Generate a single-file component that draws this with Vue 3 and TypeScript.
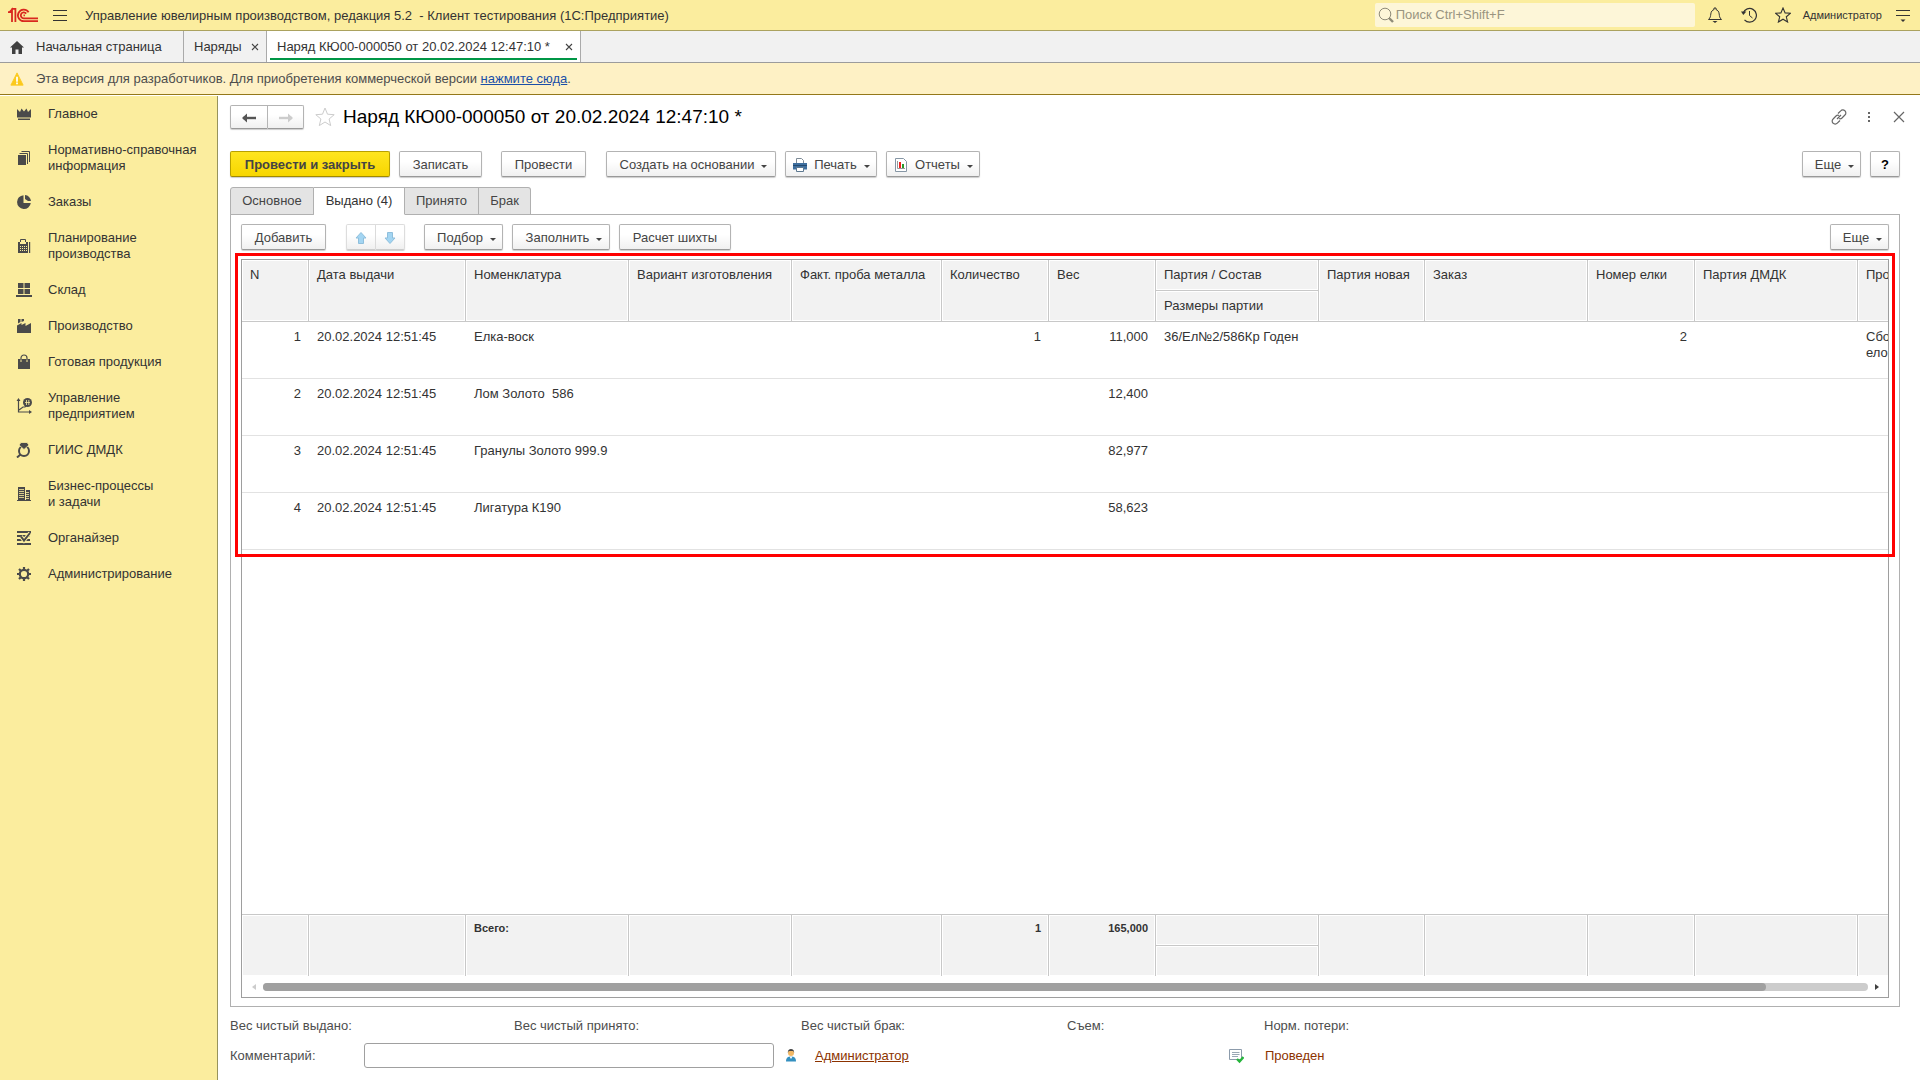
<script setup lang="ts">
import { ref } from 'vue'

interface Section { lines: string[]; icon: string }
interface Column { key: string; title: string; width: number; num?: boolean; sub?: string; total?: string }
type Row = Record<string, string>

const sections: Section[] = [
  { lines: ['Главное'], icon: 'crown' },
  { lines: ['Нормативно-справочная', 'информация'], icon: 'books' },
  { lines: ['Заказы'], icon: 'pie' },
  { lines: ['Планирование', 'производства'], icon: 'calc' },
  { lines: ['Склад'], icon: 'store' },
  { lines: ['Производство'], icon: 'factory' },
  { lines: ['Готовая продукция'], icon: 'bag' },
  { lines: ['Управление', 'предприятием'], icon: 'chart' },
  { lines: ['ГИИС ДМДК'], icon: 'ring' },
  { lines: ['Бизнес-процессы', 'и задачи'], icon: 'building' },
  { lines: ['Органайзер'], icon: 'organizer' },
  { lines: ['Администрирование'], icon: 'gear' },
]

const columns: Column[] = [
  { key: 'n', title: 'N', width: 67, num: true },
  { key: 'date', title: 'Дата выдачи', width: 157 },
  { key: 'item', title: 'Номенклатура', width: 163, total: 'Всего:' },
  { key: 'variant', title: 'Вариант изготовления', width: 163 },
  { key: 'fineness', title: 'Факт. проба металла', width: 150 },
  { key: 'qty', title: 'Количество', width: 107, num: true, total: '1' },
  { key: 'weight', title: 'Вес', width: 107, num: true, total: '165,000' },
  { key: 'batch', title: 'Партия / Состав', width: 163, sub: 'Размеры партии' },
  { key: 'newBatch', title: 'Партия новая', width: 106 },
  { key: 'order', title: 'Заказ', width: 163 },
  { key: 'tree', title: 'Номер елки', width: 107, num: true },
  { key: 'dmdk', title: 'Партия ДМДК', width: 163 },
  { key: 'process', title: 'Процесс', width: 80 },
]

const rows: Row[] = [
  { n: '1', date: '20.02.2024 12:51:45', item: 'Елка-воск', qty: '1', weight: '11,000', batch: '36/Ел№2/586Кр Годен', tree: '2', process: 'Сборка елок' },
  { n: '2', date: '20.02.2024 12:51:45', item: 'Лом Золото  586', weight: '12,400' },
  { n: '3', date: '20.02.2024 12:51:45', item: 'Гранулы Золото 999.9', weight: '82,977' },
  { n: '4', date: '20.02.2024 12:51:45', item: 'Лигатура К190', weight: '58,623' },
]

const pages = [
  { title: 'Основное', cls: 'p-main' },
  { title: 'Выдано (4)', cls: 'p-issued' },
  { title: 'Принято', cls: 'p-received' },
  { title: 'Брак', cls: 'p-defect' },
]
const activePage = ref(1)
const query = ref('')
const comment = ref('')
</script>

<template>
  <div class="app">
    <header class="titlebar">
      <svg class="logo" viewBox="0 0 30 16" fill="none" stroke="#d9281e" stroke-width="1.8">
        <path d="M0 5.200H1.600L4 2.600V15M3.400 1.900H7.400V15M.6 5.200H4" />
        <path d="M20.600 5.200A5.800 5.800 0 1 0 16 14.200H30" />
        <path d="M18.200 6.600A3 3 0 1 0 16 11.400H30" />
        <path d="M15.500 8.400h1.400" />
      </svg>
      <button class="bare burger" aria-label="Меню">
        <svg viewBox="0 0 14 14" stroke="#333" stroke-width="1"><path d="M0 2.500h14M0 7.500h14M0 12.500h14" /></svg>
      </button>
      <div class="app-title">Управление ювелирным производством, редакция 5.2 &nbsp;- Клиент тестирования (1С:Предприятие)</div>
      <label class="search">
        <svg viewBox="0 0 16 16" fill="none" stroke="#8f8b78"><circle cx="7" cy="7" r="5.800" /><path d="M11 11l4 4" stroke-width="2.400" /></svg>
        <input v-model="query" type="text" placeholder="Поиск Ctrl+Shift+F" aria-label="Поиск" />
      </label>
      <div class="tools">
        <button class="bare" aria-label="Уведомления">
          <svg viewBox="0 0 16 16" fill="none" stroke="#333"><path d="M1.500 12.500h13c-2.200-2-2-3.500-2.300-5.500C11.900 4.300 10.500 3 9 2.600V1H7v1.600C5.500 3 4.100 4.300 3.800 7c-.3 2-.1 3.500-2.300 5.500z" /><path d="M5.500 14h5L8 16z" fill="#333" stroke="none" /></svg>
        </button>
        <button class="bare" aria-label="История">
          <svg viewBox="0 0 16 16" fill="none" stroke="#333"><path d="M2.200 6A6.800 6.800 0 1 1 3.500 12.800" stroke-width="1.200" /><path d="M8.500 4v4.500l3 2.500" /><path d="M0 4.500h5.400L2.300 8z" fill="#333" stroke="none" /></svg>
        </button>
        <button class="bare" aria-label="Избранное">
          <svg viewBox="0 0 16 16" fill="none" stroke="#333" stroke-width="1.100"><path d="M8 1l2.100 4.900 5.200.4-4 3.500 1.300 5.200L8 12.200 3.400 15l1.300-5.200-4-3.500 5.200-.4z" /></svg>
        </button>
      </div>
      <a href="#" class="user">Администратор</a>
      <button class="bare settings" aria-label="Сервис и настройки">
        <svg viewBox="0 0 14 14" stroke="#333"><path d="M0 2.500h14M0 7.500h14" /><path d="M4.500 11.500h5L7 14z" fill="#333" stroke="none" /></svg>
      </button>
    </header>

    <nav class="windows">
      <a href="#" class="win home">
        <svg viewBox="0 0 16 16" fill="#404040"><path d="M8 2l7 6.500h-2V15H9.500v-4.500h-3V15H3V8.500H1z" /></svg>
        <span>Начальная страница</span>
      </a>
      <div class="win orders"><a href="#">Наряды</a><button class="bare close" aria-label="Закрыть"><svg viewBox="0 0 8 8" stroke="#444" stroke-width="1.100"><path d="M1 1l6 6M7 1L1 7" /></svg></button></div>
      <div class="win current"><a href="#">Наряд КЮ00-000050 от 20.02.2024 12:47:10 *</a><button class="bare close" aria-label="Закрыть"><svg viewBox="0 0 8 8" stroke="#444" stroke-width="1.100"><path d="M1 1l6 6M7 1L1 7" /></svg></button></div>
    </nav>

    <div class="notice">
      <svg viewBox="0 0 16 16"><path d="M8 1l7 14H1z" fill="#fbc91b" stroke="#fbc91b" stroke-linejoin="round" /><path d="M7 5.500h2V11H7zM7 12h2v2H7z" fill="#fff" /></svg>
      <span>Эта версия для разработчиков. Для приобретения коммерческой версии <a href="#">нажмите сюда</a>.</span>
    </div>

    <div class="body">
      <aside class="sidebar">
        <a v-for="s in sections" :key="s.icon" href="#" class="section">
          <svg viewBox="0 0 16 16" fill="#4a4a4a">
            <path v-if="s.icon === 'crown'" d="M1 3l3 3 1.500-3.500L8 5.500l2.500-3L12 6l3-3v8.500H1zM2 12.500h12V14H2z" />
            <g v-else-if="s.icon === 'books'"><path d="M2 5h8v10H2z" /><path d="M3.500 3.500h8V14M5.500 1.500h8V12" fill="none" stroke="#4a4a4a" /></g>
            <g v-else-if="s.icon === 'pie'"><path d="M7.500 1.200A6.900 6.900 0 1 0 14.800 9H7.500z" /><path d="M9 1a6.500 6.500 0 0 1 6 6h-3L9 5z" /></g>
            <g v-else-if="s.icon === 'calc'"><path d="M4.500 5V1.500h5V5" fill="none" stroke="#4a4a4a" /><path d="M2 4h10v11H2zM13 4h1.200v11H13z" /><path d="M4 4h6v2H4z" fill="#fbed9e" /><path d="M4 8.500h7M4 10.500h7M4 12.500h7" stroke="#fbed9e" stroke-dasharray="1 1" /></g>
            <path v-else-if="s.icon === 'store'" d="M2 1h5.500v5H2zM8.500 1H14v5H8.500zM2 7h5.500v5H2zM8.500 7H14v5H8.500zM0 13h16v2H0z" />
            <path v-else-if="s.icon === 'factory'" d="M1 15V7.500L5.500 5V7l4-2v3L15 5v10zM2 1h2.500v3L2 5.500zM5.500 1H8v2L5.500 4z" />
            <g v-else-if="s.icon === 'bag'"><path d="M2 5h12v10H2z" /><path d="M5 8V4a3 3 0 0 1 6 0v4" fill="none" stroke="#4a4a4a" stroke-width="1.200" /><path d="M5 5.500V8M11 5.500V8" stroke="#fbed9e" /></g>
            <g v-else-if="s.icon === 'chart'"><path d="M2.500 2v12H14M3 12l4-3 2 0 2-2" fill="none" stroke="#4a4a4a" stroke-width="1.200" /><path d="M2.500 0l2 3h-4zM16 14l-3 2v-4z" /><circle cx="11.500" cy="4.500" r="4.500" /><path d="M10.500 2v5M12.800 2v5M9 4.500h5" stroke="#fbed9e" stroke-width=".8" /></g>
            <g v-else-if="s.icon === 'ring'"><circle cx="8" cy="9" r="5" fill="none" stroke="#4a4a4a" stroke-width="2" /><path d="M5 .5h6l2 2.500L8 7.500 3 3z" stroke="#fbed9e" stroke-width=".8" /><path d="M4.500 12.500L1 15.500" stroke="#4a4a4a" stroke-width="2" /></g>
            <g v-else-if="s.icon === 'building'"><path d="M2 1h7v14H2zM10 4h4v11h-4zM1 14h14v1H1z" /><path d="M3 3.500h5M3 5.500h5M3 7.500h5M3 9.500h5M3 11.500h5M10 6.500h3M10 8.500h3M10 10.500h3M10 12.500h3" stroke="#fbed9e" stroke-width=".8" /></g>
            <g v-else-if="s.icon === 'organizer'" fill="none" stroke="#4a4a4a"><path d="M1 2h14M1 6h13M1 10h13M1 14h14" stroke-width="2" /><path d="M5 6.500l3 4L14 3" stroke="#fbed9e" stroke-width="4" /><path d="M5 6.500l3 4L14 3" stroke-width="2" /></g>
            <g v-else fill="none" stroke="#4a4a4a"><circle cx="8" cy="8" r="4.200" stroke-width="2.200" /><path d="M8 1v2.500M8 12.500V15M1 8h2.500M12.500 8H15M3 3l1.800 1.800M11.200 11.200L13 13M3 13l1.800-1.800M11.200 4.800L13 3" stroke-width="2.200" /></g>
          </svg>
          <span><template v-for="(l, i) in s.lines" :key="l"><br v-if="i" />{{ l }}</template></span>
        </a>
      </aside>

      <main class="form">
        <div class="form-head">
          <div class="pair nav">
            <button class="btn" aria-label="Назад"><svg viewBox="0 0 16 12"><path d="M2 6h13" stroke="#555" stroke-width="2.400" /><path d="M1 6l5-4.500v9z" fill="#555" /></svg></button>
            <button class="btn" aria-label="Вперед"><svg viewBox="0 0 16 12"><path d="M1 6h13" stroke="#ccc" stroke-width="2.400" /><path d="M15 6l-5-4.500v9z" fill="#ccc" /></svg></button>
          </div>
          <button class="bare fav" aria-label="В избранное"><svg viewBox="0 0 20 20" fill="none" stroke="#ccc"><path d="M10 1l2.500 6.200 6.700.5-5.100 4.300 1.600 6.600L10 15l-5.700 3.600L5.900 12 .8 7.700l6.700-.5z" /></svg></button>
          <h1>Наряд КЮ00-000050 от 20.02.2024 12:47:10 *</h1>
          <div class="form-tools">
            <button class="bare" aria-label="Ссылка"><svg viewBox="0 0 16 16" fill="none" stroke="#666" stroke-width="1.200"><path d="M7 4.500l2.700-2.700a2.800 2.800 0 0 1 4.200 0 2.800 2.800 0 0 1 0 4.200L11 9a2.800 2.800 0 0 1-3 .5M9 11.500l-2.700 2.700a2.800 2.800 0 0 1-4.200 0 2.800 2.800 0 0 1 0-4.200L5 7a2.800 2.800 0 0 1 3-.5M6 10l4-4" /></svg></button>
            <button class="bare" aria-label="Дополнительно"><svg viewBox="0 0 16 16" fill="#666"><path d="M7 3h2v2H7zM7 7h2v2H7zM7 11h2v2H7z" /></svg></button>
            <button class="bare" aria-label="Закрыть"><svg viewBox="0 0 16 16" stroke="#666" stroke-width="1.200"><path d="M3 3l10 10M13 3L3 13" /></svg></button>
          </div>
        </div>

        <div class="commands">
          <button class="btn primary">Провести и закрыть</button>
          <button class="btn w-save">Записать</button>
          <button class="btn w-post">Провести</button>
          <button class="btn w-create">Создать на основании<i class="caret"></i></button>
          <button class="btn w-print"><svg viewBox="0 0 16 16"><path d="M4.500 6V1.500h5l2 2V6" fill="#fff" stroke="#7d8a96" /><path d="M1 6h14v6.500H1z" fill="#3f6f9f" /><path d="M1 8.500h14" stroke="#244a70" /><path d="M4.500 10.500h7v4h-7z" fill="#fff" stroke="#5d7890" /></svg>Печать<i class="caret"></i></button>
          <button class="btn w-report"><svg viewBox="0 0 16 16"><path d="M2.500 1.500h8l3 3v10h-11z" fill="#fff" stroke="#8696a5" /><path d="M4.500 4v7.500H12" fill="none" stroke="#999" /><path d="M6 5h2v6H6z" fill="#e22" /><path d="M9 7h2v4H9z" fill="#2a9a2a" /></svg>Отчеты<i class="caret"></i></button>
          <button class="btn w-more push">Еще<i class="caret"></i></button>
          <button class="btn w-help">?</button>
        </div>

        <div class="pages" role="tablist">
          <button v-for="(p, i) in pages" :key="p.title" role="tab" :aria-selected="i === activePage" :class="['page', p.cls, { active: i === activePage }]" @click="activePage = i">{{ p.title }}</button>
        </div>

        <section class="panel">
          <div class="table-tools">
            <button class="btn w-add">Добавить</button>
            <div class="pair arrows">
              <button class="btn" aria-label="Вверх"><svg viewBox="0 0 12 12"><path d="M6 .5l5 5.500H8.500v5.500h-5V6H1z" fill="#a3d5f2" stroke="#8fbfdc" /></svg></button>
              <button class="btn" aria-label="Вниз"><svg viewBox="0 0 12 12"><path d="M6 11.500L1 6h2.500V.5h5V6H11z" fill="#a3d5f2" stroke="#8fbfdc" /></svg></button>
            </div>
            <button class="btn w-pick">Подбор<i class="caret"></i></button>
            <button class="btn w-fill">Заполнить<i class="caret"></i></button>
            <button class="btn w-charge">Расчет шихты</button>
            <button class="btn w-more push">Еще<i class="caret"></i></button>
          </div>

          <div class="grid-wrap">
            <div class="grid">
              <table>
                <colgroup><col v-for="c in columns" :key="c.key" :style="{ width: c.width + 'px' }" /></colgroup>
                <thead>
                  <tr><th v-for="c in columns" :key="c.key" scope="col" :rowspan="c.sub ? 1 : 2">{{ c.title }}</th></tr>
                  <tr><template v-for="c in columns" :key="c.key"><th v-if="c.sub" scope="col">{{ c.sub }}</th></template></tr>
                </thead>
                <tbody>
                  <tr v-for="r in rows" :key="r.n"><td v-for="c in columns" :key="c.key" :class="{ num: c.num }">{{ r[c.key] }}</td></tr>
                  <tr class="rest"><td :colspan="columns.length"></td></tr>
                </tbody>
                <tfoot>
                  <tr><td v-for="c in columns" :key="c.key" :rowspan="c.sub ? 1 : 2" :class="{ num: c.num, split: c.sub }">{{ c.total }}</td></tr>
                  <tr><td></td></tr>
                </tfoot>
              </table>
            </div>
            <div class="scroll">
              <svg viewBox="0 0 5 8" fill="#ccc"><path d="M4 1v6L0 4z" /></svg>
              <div class="track"><div class="thumb"></div></div>
              <svg viewBox="0 0 5 8" fill="#404040"><path d="M1 1v6l4-3z" /></svg>
            </div>
            <div class="highlight"></div>
          </div>
        </section>

        <footer class="summary">
          <div class="totals">
            <span>Вес чистый выдано:</span>
            <span>Вес чистый принято:</span>
            <span>Вес чистый брак:</span>
            <span>Съем:</span>
            <span>Норм. потери:</span>
          </div>
          <div class="details">
            <label for="comment">Комментарий:</label>
            <input id="comment" v-model="comment" type="text" />
            <div class="author">
              <svg viewBox="0 0 16 16"><path d="M3 13.500c0-4 2-5 5-5s5 1 5 5z" fill="#3490c0" /><path d="M6.500 8.500L8 11l1.500-2.500z" fill="#fff" /><circle cx="8" cy="5" r="3" fill="#f2b866" /><path d="M4.800 5C4.800 2 6 1 8 1s3.200 1 3.200 4l-1-2H5.800z" fill="#444" /></svg>
              <a href="#">Администратор</a>
            </div>
            <div class="status">
              <svg viewBox="0 0 16 16"><path d="M1.500 1.500h12v10h-12z" fill="#fff" stroke="#8c9bab" /><path d="M4 4.500h7.500M4 6.500h7.500M4 8.500h6" stroke="#9aa8b5" /><path d="M9 11l2.500 2.500L15.500 9" fill="none" stroke="#27b53c" stroke-width="2.400" /></svg>
              <span>Проведен</span>
            </div>
          </div>
        </footer>
      </main>
    </div>
  </div>
</template>

<style>
body { margin: 0; }
</style>

<style scoped>
.app {
  display: flex;
  flex-direction: column;
  height: 100vh;
  min-height: 700px;
  overflow: hidden;
  background: #fff;
  color: #333;
  font: 13px/16px "Liberation Sans", Arial, sans-serif;
}
.app *, .app { box-sizing: border-box; }
button, input { font: inherit; color: inherit; margin: 0; padding: 0; }
svg { display: block; flex: none; width: 16px; height: 16px; }
a { color: inherit; text-decoration: none; }
.bare { border: 0; background: none; display: flex; align-items: center; justify-content: center; }

.titlebar {
  display: flex;
  align-items: center;
  height: 31px;
  flex: none;
  padding: 0 10px 0 8px;
  background: #fbed9e;
  border-bottom: 1px solid #aba25f;
}
.titlebar .logo { width: 30px; height: 16px; }
.burger { margin-left: 15px; }
.burger svg, .settings svg { width: 14px; height: 14px; }
.app-title { flex: 1; margin-left: 18px; padding-top: 1px; white-space: nowrap; }
.search {
  display: flex;
  align-items: center;
  width: 320px;
  height: 24px;
  padding-left: 3px;
  gap: 2px;
  background: #fdf6d8;
  border-radius: 2px;
}
.search input { flex: 1; border: 0; outline: 0; background: none; }
.search input::placeholder { color: #999480; opacity: 1; }
.tools { display: flex; gap: 18px; margin-left: 12px; }
.user { margin-left: 12px; font-size: 11px; }
.settings { margin-left: 14px; }

.windows { display: flex; flex: none; height: 32px; background: #f1f1f1; border-bottom: 1px solid #9c9c9c; }
.win { display: flex; align-items: center; border-right: 1px solid #aaa; white-space: nowrap; }
.home { width: 184px; padding-left: 9px; gap: 11px; }
.orders { width: 83px; padding: 0 7px 0 10px; justify-content: space-between; }
.current { width: 314px; padding: 0 7px 0 10px; justify-content: space-between; background: linear-gradient(#009646, #009646) 3px 27px / 307px 2px no-repeat #fff; }
.close svg { width: 8px; height: 8px; }

.notice {
  display: flex;
  align-items: center;
  flex: none;
  gap: 11px;
  height: 32px;
  padding-left: 9px;
  background: #fef1c5;
  border-bottom: 1px solid #94781a;
  color: #4d4d4d;
}
.notice svg { width: 16px; height: 14px; }
.notice a { color: #1a4fa8; text-decoration: underline; }

.body { display: flex; flex: 1; min-height: 0; }
.sidebar { flex: none; width: 218px; margin-top: 1px; background: #fbed9e; border-right: 1px solid #97935c; }
.section { display: flex; align-items: center; gap: 16px; padding: 10px 0 10px 16px; }

.form { display: flex; flex-direction: column; flex: 1; min-width: 0; padding: 10px 20px 12px 12px; }
.form-head { display: flex; align-items: center; height: 24px; }
.btn {
  display: flex;
  align-items: center;
  justify-content: center;
  height: 26px;
  padding-top: 1px;
  white-space: nowrap;
  color: #444;
  background: linear-gradient(#fff, #fff 40%, #f0f0f0);
  border: 1px solid #b3b3b3;
  border-bottom-color: #999;
  border-radius: 2px;
  box-shadow: 0 1px 1px #ccc;
}
.pair { display: flex; }
.pair .btn:first-child { border-radius: 2px 0 0 2px; }
.pair .btn:last-child { border-left: 0; border-radius: 0 2px 2px 0; }
.nav .btn { width: 38px; height: 24px; }
.nav .btn + .btn { width: 36px; }
.nav .btn svg { width: 16px; height: 12px; }
.fav { margin-left: 11px; }
.fav svg { width: 20px; height: 20px; }
h1 { margin: 0 0 0 8px; font-size: 19px; line-height: 24px; font-weight: 400; color: #000; white-space: nowrap; }
.form-tools { display: flex; gap: 14px; margin-left: auto; margin-right: -7px; }

.commands { display: flex; margin-top: 22px; gap: 9px; }
.primary { width: 160px; font-weight: 700; background: linear-gradient(#ffe51f, #f7d600); border-color: #b8a000; border-bottom-color: #a08a00; }
.caret { width: 0; height: 0; margin: 3px 0 0 7px; border: 3px solid transparent; border-top-color: #444; border-bottom: 0; }
.w-save { width: 83px; }
.w-post { width: 85px; margin-left: 10px; }
.w-create { width: 170px; margin-left: 11px; padding-left: 5px; }
.w-print { width: 92px; }
.w-report { width: 94px; }
.w-print > svg, .w-report > svg { margin-right: 6px; }
.w-more { width: 59px; padding-left: 6px; }
.w-help { width: 30px; color: #000; font-weight: 700; }
.push { margin-left: auto; }

.pages { display: flex; flex: none; margin: 10px 0 -1px; height: 28px; z-index: 1; }
.page {
  background: #e4e4e4;
  border: 1px solid #b0b0b0;
  border-left-width: 0;
  color: #444;
  padding-bottom: 1px;
}
.page:first-child { border-left-width: 1px; border-radius: 3px 0 0 0; }
.page:last-child { border-radius: 0 3px 0 0; }
.page.active { background: #fff; border-bottom-color: #fff; color: #333; }
.p-main { width: 84px; }
.p-issued { width: 91px; }
.p-received { width: 74px; }
.p-defect { width: 52px; }

.panel { display: flex; flex-direction: column; flex: 1; min-height: 0; padding: 9px 10px 8px; border: 1px solid #b0b0b0; }
.table-tools { display: flex; gap: 9px; margin-bottom: 9px; }
.w-add { width: 85px; }
.arrows { margin: 0 10px 0 11px; }
.arrows .btn { width: 30px; border-color: #ddd; border-bottom-color: #ccc; }
.arrows .btn + .btn { width: 29px; }
.arrows svg { width: 12px; height: 12px; }
.w-pick { width: 79px; padding-left: 6px; }
.w-fill { width: 98px; padding-left: 6px; }
.w-charge { width: 112px; }

.grid-wrap { position: relative; display: flex; flex-direction: column; flex: 1; min-height: 0; border: 1px solid #9e9e9e; }
.grid { display: flex; flex: 1; min-height: 0; overflow: hidden; }
table { flex: none; width: 1696px; min-width: 100%; table-layout: fixed; border-collapse: separate; border-spacing: 0; }
th, td { padding: 7px 8px 0; vertical-align: top; text-align: left; font-weight: 400; overflow: hidden; }
thead tr { height: 31px; }
thead th, tfoot td {
  background: #f2f2f2;
  border-right: 1px solid #c8c8c8;
  box-shadow: inset 0 0 0 1px #fff;
  white-space: nowrap;
}
thead th { border-bottom: 1px solid #c8c8c8; }
tbody tr { height: 57px; }
tbody td { border-bottom: 1px solid #e2e2e2; white-space: pre-wrap; }
tbody .rest { height: auto; }
.rest td { border: 0; padding: 0; }
.num { text-align: right; }
tfoot td { padding-right: 7px; font-size: 11px; line-height: 12px; font-weight: 700; }
tfoot tr:first-child { height: 32px; }
tfoot tr:last-child { height: 30px; }
tfoot tr:first-child td { border-top: 1px solid #c8c8c8; }
tfoot .split { border-bottom: 1px solid #c8c8c8; }

.scroll { display: flex; align-items: center; flex: none; gap: 6px; height: 21px; padding: 0 9px 0 10px; }
.scroll svg { width: 5px; height: 8px; }
.track { flex: 1; height: 8px; border-radius: 4px; background: #ccc; }
.thumb { width: calc(100% - 102px); height: 8px; border-radius: 4px; background: #a0a0a0; }
.highlight { position: absolute; top: -7px; left: -7px; right: -7px; height: 304px; border: 3px solid #f00; pointer-events: none; }

.summary { color: #4d4d4d; padding-top: 11px; }
.totals { display: flex; }
.totals span { width: 197px; }
.totals span:nth-child(1) { width: 284px; }
.totals span:nth-child(2) { width: 287px; }
.totals span:nth-child(3) { width: 266px; }
.details { display: flex; align-items: center; margin-top: 9px; }
.details label { width: 134px; }
.details input { width: 410px; height: 25px; padding: 0 6px; border: 1px solid #a0a0a0; border-radius: 3px; outline: 0; }
.author { display: flex; width: 448px; padding-left: 9px; gap: 16px; color: #8c3300; }
.author a { text-decoration: underline; }
.status { display: flex; padding-left: 6px; gap: 21px; color: #8c3300; }
</style>
